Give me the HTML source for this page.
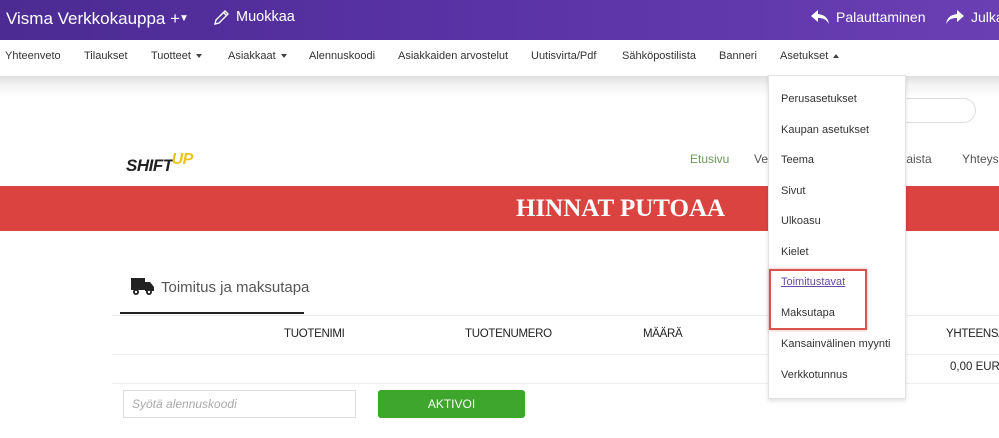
<!DOCTYPE html>
<html><head><meta charset="utf-8"><style>
*{margin:0;padding:0;box-sizing:border-box}
body{width:999px;height:438px;overflow:hidden;background:#fff;font-family:"Liberation Sans","DejaVu Sans",sans-serif;position:relative}
.a{position:absolute;white-space:nowrap}
.top{left:0;top:0;width:999px;height:40px;background:linear-gradient(90deg,#4c2b93,#5a33a6 50%,#6a3fb3)}
.top .a{color:#fff}
.nav{top:40px;left:0;width:999px;height:36px;background:#fff}
.nav span{position:absolute;top:10px;font-size:11px;color:#333}
.shadow{top:76px;left:0;width:999px;height:22px;background:linear-gradient(#dedede,#f3f3f3 40%,#fff)}
.car{border-left:3.5px solid transparent;border-right:3.5px solid transparent;border-top:4px solid #444;display:inline-block;vertical-align:middle;margin-left:5px}
.caru{border-left:3.5px solid transparent;border-right:3.5px solid transparent;border-bottom:4px solid #444;display:inline-block;vertical-align:middle;margin-left:5px}
.dd{left:768px;top:75px;width:138px;height:324px;background:#fff;border:1px solid #e2e2e2;box-shadow:0 2px 4px rgba(0,0,0,.12)}
.dd span{position:absolute;left:12px;font-size:11px;color:#333}
.th{font-size:11.5px;color:#222;top:328px;letter-spacing:-.3px}
</style></head><body>
<div class="a top">
 <div class="a" style="left:6px;top:9px;font-size:17px">Visma Verkkokauppa +</div>
 <div class="a" style="left:179px;top:13px;font-size:10px">▼</div>
 <svg class="a" style="left:212px;top:9px" width="18" height="18" viewBox="0 0 18 18" fill="none" stroke="#fff" stroke-width="1.4"><path d="M3 15l1-4L13 2l3 3-9 9z M11.5 3.5l3 3"/></svg>
 <div class="a" style="left:236px;top:9px;font-size:14.5px">Muokkaa</div>
 <svg class="a" style="left:810px;top:9px" width="20" height="16" viewBox="0 0 20 16" fill="#fff"><path d="M8 1L1 7l7 6V9c5 0 8 1 11 6-1-6-4-9-11-10z"/></svg>
 <div class="a" style="left:836px;top:9px;font-size:14px">Palauttaminen</div>
 <svg class="a" style="left:945px;top:9px" width="20" height="16" viewBox="0 0 20 16" fill="#fff"><path d="M12 1l7 6-7 6V9C7 9 4 10 1 15c1-6 4-9 11-10z"/></svg>
 <div class="a" style="left:971px;top:9px;font-size:14px">Julkaise</div>
</div>
<div class="a nav">
 <span style="left:5px">Yhteenveto</span>
 <span style="left:84px">Tilaukset</span>
 <span style="left:151px">Tuotteet<i class="car"></i></span>
 <span style="left:228px">Asiakkaat<i class="car"></i></span>
 <span style="left:309px">Alennuskoodi</span>
 <span style="left:398px">Asiakkaiden arvostelut</span>
 <span style="left:531px">Uutisvirta/Pdf</span>
 <span style="left:622px">Sähköpostilista</span>
 <span style="left:719px">Banneri</span>
 <span style="left:780px">Asetukset<i class="caru"></i></span>
</div>
<div class="a shadow"></div>
<div class="a" style="left:895px;top:98px;width:81px;height:25px;border:1px solid #ddd;border-radius:13px"></div>
<div class="a" style="left:126px;top:152px;font-size:17px;font-weight:bold;font-style:italic;color:#222;letter-spacing:-.5px;line-height:28px">SHIFT<span style="color:#e8c51c;font-size:16px;position:relative;top:-7px;left:-1px">UP</span></div>
<div class="a" style="left:690px;top:152px;font-size:12px;color:#6a9a5a">Etusivu</div>
<div class="a" style="left:754px;top:152px;font-size:12px;color:#555">Ve</div>
<div class="a" style="left:903px;top:152px;font-size:12px;color:#555">taista</div>
<div class="a" style="left:962px;top:152px;font-size:12px;color:#555">Yhteys</div>
<div class="a" style="left:0;top:186px;width:999px;height:45px;background:#db4341"></div>
<div class="a" style="left:516px;top:195px;font-family:'Liberation Serif',serif;font-weight:bold;font-size:25px;color:#fff">HINNAT PUTOAA</div>
<svg class="a" style="left:131px;top:277px" width="24" height="19" viewBox="0 0 24 19" fill="#222"><path d="M0 1h14v12H0z M14 5h5l4 5v4H14z"/><circle cx="5" cy="15" r="3"/><circle cx="18" cy="15" r="3"/><circle cx="5" cy="15" r="1.2" fill="#fff"/><circle cx="18" cy="15" r="1.2" fill="#fff"/></svg>
<div class="a" style="left:161px;top:279px;font-size:15px;color:#555">Toimitus ja maksutapa</div>
<div class="a" style="left:112px;top:315px;width:887px;height:1px;background:#e8e8e8"></div>
<div class="a" style="left:120px;top:312px;width:184px;height:2px;background:#222"></div>
<div class="a th" style="left:284px">TUOTENIMI</div>
<div class="a th" style="left:465px">TUOTENUMERO</div>
<div class="a th" style="left:643px">MÄÄRÄ</div>
<div class="a th" style="left:946px">YHTEENSÄ</div>
<div class="a" style="left:112px;top:354px;width:887px;height:1px;background:#eee"></div>
<div class="a" style="left:112px;top:383px;width:887px;height:1px;background:#eee"></div>
<div class="a" style="left:950px;top:361px;font-size:11.5px;color:#222">0,00 EUR</div>
<div class="a" style="left:123px;top:390px;width:233px;height:28px;border:1px solid #ddd"></div>
<div class="a" style="left:132px;top:397px;font-size:12px;font-style:italic;color:#aaa">Syötä alennuskoodi</div>
<div class="a" style="left:378px;top:390px;width:147px;height:28px;background:#3ea52d;border-radius:3px;color:#fff;font-size:12px;text-align:center;line-height:28px">AKTIVOI</div>
<div class="a dd">
 <span style="top:17px">Perusasetukset</span>
 <span style="top:48px">Kaupan asetukset</span>
 <span style="top:78px">Teema</span>
 <span style="top:109px">Sivut</span>
 <span style="top:139px">Ulkoasu</span>
 <span style="top:170px">Kielet</span>
 <span style="top:200px;color:#6a4aa8;text-decoration:underline">Toimitustavat</span>
 <span style="top:231px">Maksutapa</span>
 <span style="top:262px">Kansainvälinen myynti</span>
 <span style="top:293px">Verkkotunnus</span>
</div>
<div class="a" style="left:769px;top:269px;width:98px;height:61px;border:2px solid #d9534f;box-shadow:0 0 3px rgba(217,83,79,.5)"></div>
</body></html>
